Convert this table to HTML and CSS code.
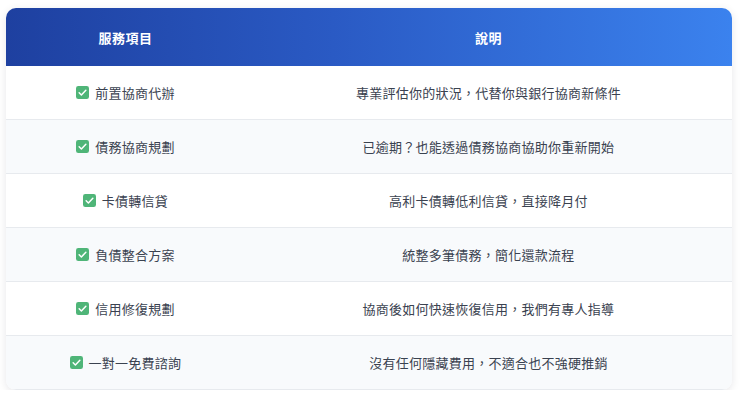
FILE: index.html
```html
<!DOCTYPE html>
<html lang="zh-Hant">
<head>
<meta charset="utf-8">
<link rel="stylesheet" href="styles.css">
</head>
<body>
<div class="card">
  <table class="svc">
    <thead>
      <tr><th class="c1">服務項目</th><th class="c2">說明</th></tr>
    </thead>
    <tbody>
      <tr><td class="c1"><span class="item"><svg class="chk" viewBox="0 0 14 14"><rect width="14" height="14" rx="2.5" fill="#4fb578"/><path d="M3.4 7.3l2.4 2.3 4.8-5" fill="none" stroke="#fff" stroke-width="1.6" stroke-linecap="round" stroke-linejoin="round"/></svg>前置協商代辦</span></td><td class="c2">專業評估你的狀況，代替你與銀行協商新條件</td></tr>
      <tr><td class="c1"><span class="item"><svg class="chk" viewBox="0 0 14 14"><rect width="14" height="14" rx="2.5" fill="#4fb578"/><path d="M3.4 7.3l2.4 2.3 4.8-5" fill="none" stroke="#fff" stroke-width="1.6" stroke-linecap="round" stroke-linejoin="round"/></svg>債務協商規劃</span></td><td class="c2">已逾期？也能透過債務協商協助你重新開始</td></tr>
      <tr><td class="c1"><span class="item"><svg class="chk" viewBox="0 0 14 14"><rect width="14" height="14" rx="2.5" fill="#4fb578"/><path d="M3.4 7.3l2.4 2.3 4.8-5" fill="none" stroke="#fff" stroke-width="1.6" stroke-linecap="round" stroke-linejoin="round"/></svg>卡債轉信貸</span></td><td class="c2">高利卡債轉低利信貸，直接降月付</td></tr>
      <tr><td class="c1"><span class="item"><svg class="chk" viewBox="0 0 14 14"><rect width="14" height="14" rx="2.5" fill="#4fb578"/><path d="M3.4 7.3l2.4 2.3 4.8-5" fill="none" stroke="#fff" stroke-width="1.6" stroke-linecap="round" stroke-linejoin="round"/></svg>負債整合方案</span></td><td class="c2">統整多筆債務，簡化還款流程</td></tr>
      <tr><td class="c1"><span class="item"><svg class="chk" viewBox="0 0 14 14"><rect width="14" height="14" rx="2.5" fill="#4fb578"/><path d="M3.4 7.3l2.4 2.3 4.8-5" fill="none" stroke="#fff" stroke-width="1.6" stroke-linecap="round" stroke-linejoin="round"/></svg>信用修復規劃</span></td><td class="c2">協商後如何快速恢復信用，我們有專人指導</td></tr>
      <tr><td class="c1"><span class="item"><svg class="chk" viewBox="0 0 14 14"><rect width="14" height="14" rx="2.5" fill="#4fb578"/><path d="M3.4 7.3l2.4 2.3 4.8-5" fill="none" stroke="#fff" stroke-width="1.6" stroke-linecap="round" stroke-linejoin="round"/></svg>一對一免費諮詢</span></td><td class="c2">沒有任何隱藏費用，不適合也不強硬推銷</td></tr>
    </tbody>
  </table>
</div>
</body>
</html>
```
FILE: styles.css
```css
html, body {
  margin: 0;
  padding: 0;
  background: #ffffff;
}
body {
  padding: 8px 8px 0 6px;
  font-family: "Noto Sans CJK TC", "Noto Sans", sans-serif;
  color: #374151;
}
.card {
  width: 726px;
  border-radius: 10px;
  overflow: hidden;
  box-shadow: 0 2px 8px rgba(15, 23, 42, 0.10);
  background: #fff;
}
.svc {
  width: 100%;
  border-collapse: collapse;
  table-layout: fixed;
}
.svc .c1 { width: 239px; }
.svc thead tr {
  background: linear-gradient(90deg, #1e40a0 0%, #2a5ac4 45%, #3b82ee 100%);
}
.svc th {
  height: 58px;
  padding: 0;
  color: #ffffff;
  font-size: 13px;
  font-weight: 700;
  text-align: center;
  letter-spacing: 0.5px;
}
.svc td {
  height: 53px;
  padding: 0;
  font-size: 13px;
  text-align: center;
  border-bottom: 1px solid #e7eaee;
  color: #3a4250;
  letter-spacing: 0.25px;
}
.svc tbody tr:nth-child(even) { background: #f8fafc; }
.item {
  display: inline-flex;
  align-items: center;
  gap: 6px;
}
.chk {
  width: 13px;
  height: 13px;
  display: block;
}
```
